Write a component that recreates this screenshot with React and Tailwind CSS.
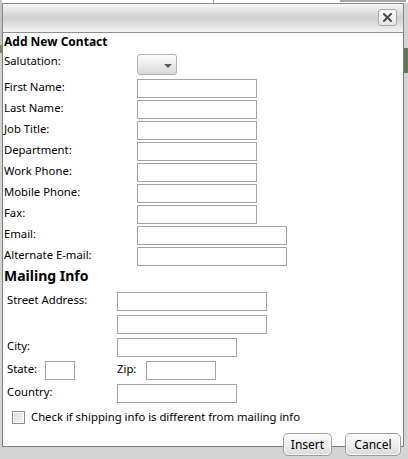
import React from "react";

const font = { fontFamily: '"Noto Sans", "Open Sans", sans-serif' };

function TextBox({ w }) {
  return <div className={`h-[19px] ${w} border border-[#a3a3a3] bg-white shrink-0`} />;
}

function Row({ label, w = "w-[120px]" }) {
  return (
    <div className="flex items-center h-[21px]">
      <div className="w-[133px] text-[11.3px] leading-[14px] text-black -mt-[4px]">{label}</div>
      <TextBox w={w} />
    </div>
  );
}

function Btn({ children, w }) {
  return (
    <div className={`h-[23px] ${w} rounded-[5px] border border-[#9a9a9a] bg-linear-to-b from-[#fbfbfb] via-[#efefef] to-[#d9d9d9] flex items-center justify-center text-[12px] text-black shadow-[inset_0_0_0_1px_rgba(255,255,255,0.8)]`}>
      {children}
    </div>
  );
}

export default function App() {
  return (
    <div className="w-[408px] h-[459px] bg-[#d4d4d4] overflow-hidden relative" style={font}>
      <div className="h-[3px] bg-white flex">
        <div className="w-[2px] h-full bg-[#c9c9c9]" />
        <div className="w-[211px]" />
        <div className="w-[1px] h-full bg-[#a0a0a0]" />
        <div className="w-[126px]" />
        <div className="w-[66px] h-[2px] bg-[#a8a8a8]" />
      </div>
      <div className="flex">
        <div className="w-[2px] h-[456px] flex flex-col">
          <div className="h-[42px] bg-[#c4c4c4]" />
          <div className="h-[8px] bg-[#6d8a5e]" />
          <div className="flex-1 bg-[#d4d4d4]" />
        </div>
        <div className="w-[402px] flex flex-col">
          {/* title bar */}
          <div className="h-[30px] border border-[#8a8a8a] border-b-[#8f8f8f] bg-linear-to-b from-[#f6f6f6] via-[#d0d0d0] to-[#f3f3f3] flex items-start justify-end pr-[6px] pt-[5px]">
            <div className="w-[19px] h-[17px] rounded-[3px] border border-[#a9a9a9] bg-linear-to-b from-[#fdfdfd] to-[#e6e6e6] flex items-center justify-center">
              <svg width="9" height="9" viewBox="0 0 9 9">
                <path d="M1 1 L8 8 M8 1 L1 8" stroke="#4d4d4d" strokeWidth="2" strokeLinecap="square" />
              </svg>
            </div>
          </div>
          {/* body */}
          <div className="h-[414px] border border-t-0 border-[#7d7d7d] bg-white flex flex-col pl-[1px]">
            <div className="h-[17px] leading-[17px] text-[12px] font-bold text-black">Add New Contact</div>
            <div className="flex items-start h-[22px] mt-[4px]">
              <div className="w-[133px] text-[11.3px] leading-[14px] text-black mt-[0px]">Salutation:</div>
              <div className="w-[40px] h-[21px] rounded-[3px] border border-[#b3b3b3] bg-linear-to-b from-[#fcfcfc] via-[#ececec] to-[#d8d8d8] flex items-center justify-end pr-[4px]">
                <svg width="8" height="4" viewBox="0 0 8 4" className="mt-[2px]">
                  <path d="M0 0 L8 0 L4 4 Z" fill="#5a5a5a" />
                </svg>
              </div>
            </div>
            <div className="flex flex-col mt-[2px]">
              <Row label="First Name:" />
              <Row label="Last Name:" />
              <Row label="Job Title:" />
              <Row label="Department:" />
              <Row label="Work Phone:" />
              <Row label="Mobile Phone:" />
              <Row label="Fax:" />
              <Row label="Email:" w="w-[150px]" />
              <Row label="Alternate E-mail:" w="w-[150px]" />
            </div>
            <div className="h-[20px] leading-[20px] text-[14px] font-bold text-black -mt-[1px]">Mailing Info</div>
            <div className="flex flex-col gap-[4px] pl-[3px] mt-[6px]">
              <div className="flex items-center">
                <div className="w-[110px] text-[11.3px] leading-[14px] text-black -mt-[3px]">Street Address:</div>
                <TextBox w="w-[150px]" />
              </div>
              <div className="flex items-center">
                <div className="w-[110px]" />
                <TextBox w="w-[150px]" />
              </div>
              <div className="flex items-center">
                <div className="w-[110px] text-[11.3px] leading-[14px] text-black -mt-[3px]">City:</div>
                <TextBox w="w-[120px]" />
              </div>
              <div className="flex items-center">
                <div className="w-[38px] text-[11.3px] leading-[14px] text-black -mt-[3px]">State:</div>
                <TextBox w="w-[30px]" />
                <div className="w-[42px]" />
                <div className="w-[29px] text-[11.3px] leading-[14px] text-black -mt-[3px]">Zip:</div>
                <TextBox w="w-[70px]" />
              </div>
              <div className="flex items-center">
                <div className="w-[110px] text-[11.3px] leading-[14px] text-black -mt-[3px]">Country:</div>
                <TextBox w="w-[120px]" />
              </div>
              <div className="flex items-center mt-[4px] pl-[5px]">
                <div className="w-[13px] h-[13px] border border-[#8e8f8f] bg-linear-to-br from-[#dcdcdc] to-[#f6f6f6] shadow-[inset_0_0_0_1px_#ffffff]" />
                <div className="ml-[6px] text-[11.3px] leading-[14px] text-black -mt-[2px]">Check if shipping info is different from mailing info</div>
              </div>
            </div>
            <div className="mt-auto -mb-[10px] flex justify-end gap-[13px] pr-[2px]">
              <Btn w="w-[49px]">Insert</Btn>
              <Btn w="w-[56px]">Cancel</Btn>
            </div>
          </div>
        </div>
        <div className="w-[4px] h-[456px] flex flex-col">
          <div className="h-[45px] bg-[#d4d4d4]" />
          <div className="h-[25px] bg-[#5f7f52]" />
          <div className="flex-1 bg-[#d4d4d4]" />
        </div>
      </div>
    </div>
  );
}
